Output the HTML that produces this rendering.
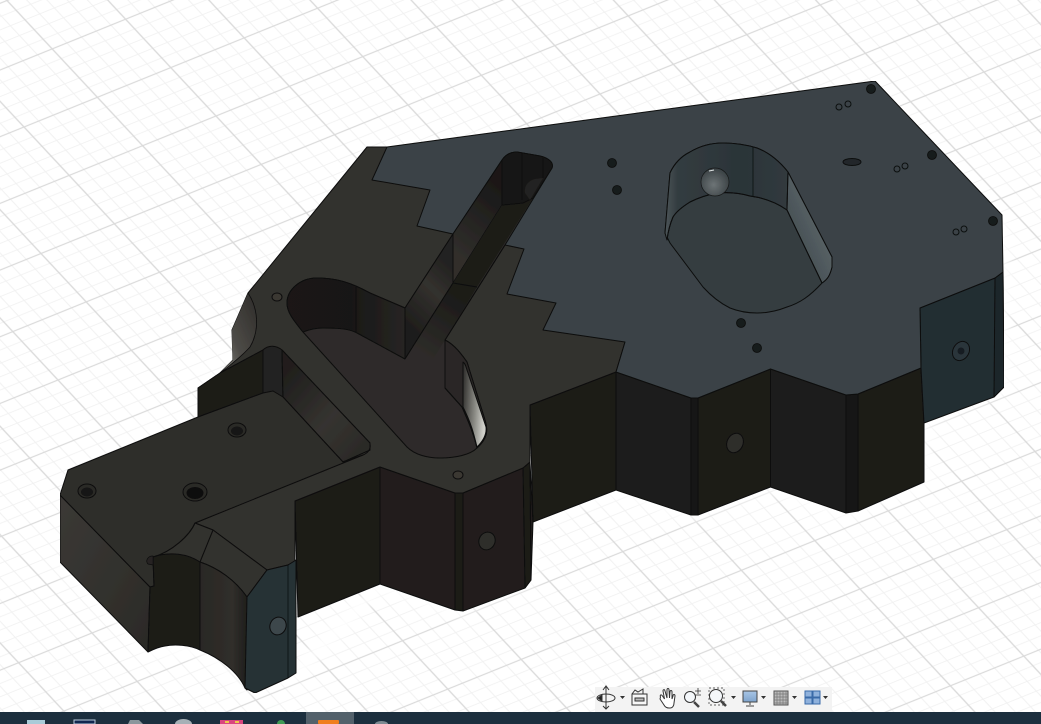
<!DOCTYPE html>
<html lang="en"><head><meta charset="utf-8"><title>CAD model view</title>
<style>
html,body{margin:0;padding:0;background:#fff;width:1041px;height:724px;overflow:hidden}
svg{display:block;position:absolute;left:0;top:0}
</style></head>
<body>
<svg width="1041" height="724" viewBox="0 0 1041 724" xmlns="http://www.w3.org/2000/svg">
<defs>
<pattern id="grid" patternUnits="userSpaceOnUse" width="100" height="100" patternTransform="matrix(.734 -.297 .452 .484 668 600)">
<rect width="100" height="100" fill="#fff"/>
<path d="M20 0V100M40 0V100M60 0V100M80 0V100M0 20H100M0 40H100M0 60H100M0 80H100" stroke="#f1f1f1" stroke-width="1.300" fill="none"/>
<path d="M0 0V100M100 0V100M0 0H100M0 100H100" stroke="#dadada" stroke-width="1.800" fill="none"/>
</pattern>
<filter id="bl" x="-10%" y="-10%" width="120%" height="120%"><feGaussianBlur stdDeviation="5"/></filter>
<filter id="soft" x="0" y="0" width="100%" height="100%"><feGaussianBlur stdDeviation=".35"/></filter>
<linearGradient id="w1" x1="0" x2="1"><stop offset="0" stop-color="#1a1918"/><stop offset=".55" stop-color="#191817"/><stop offset="1" stop-color="#272523"/></linearGradient>
<linearGradient id="w2" gradientUnits="userSpaceOnUse" x1="405" y1="320" x2="453" y2="270"><stop offset="0" stop-color="#1f1e1c"/><stop offset=".6" stop-color="#33312e"/><stop offset="1" stop-color="#242321"/></linearGradient>
<linearGradient id="w3" gradientUnits="userSpaceOnUse" x1="453" y1="250" x2="502" y2="190"><stop offset="0" stop-color="#302e2b"/><stop offset="1" stop-color="#1a1918"/></linearGradient>
<linearGradient id="fl" gradientUnits="userSpaceOnUse" x1="462" y1="300" x2="425" y2="355"><stop offset="0" stop-color="#1c1b19"/><stop offset="1" stop-color="#2e2c29"/></linearGradient>
<linearGradient id="lit" x1="0" y1="0" x2="1" y2=".2"><stop offset="0" stop-color="#2b2a28"/><stop offset=".6" stop-color="#8a8a84"/><stop offset="1" stop-color="#cfcfc9"/></linearGradient>
<linearGradient id="cut" x1="1" y1="0" x2="0" y2="1"><stop offset="0" stop-color="#2e2c29"/><stop offset=".6" stop-color="#4d4b47"/><stop offset="1" stop-color="#8b8a84"/></linearGradient>
<linearGradient id="rw" gradientUnits="userSpaceOnUse" x1="285" y1="375" x2="370" y2="450"><stop offset="0" stop-color="#201f1d"/><stop offset=".55" stop-color="#353330"/><stop offset="1" stop-color="#2a2926"/></linearGradient>
<linearGradient id="nose" x1="0" x2="1"><stop offset="0" stop-color="#2a2825"/><stop offset=".7" stop-color="#302e2a"/><stop offset="1" stop-color="#1f1e1c"/></linearGradient>
<linearGradient id="leftf" x1="0" x2="1" y1="0" y2="1"><stop offset="0" stop-color="#3b3935"/><stop offset="1" stop-color="#2b2a27"/></linearGradient>
<linearGradient id="blstrip" gradientUnits="userSpaceOnUse" x1="785" y1="235" x2="830" y2="215"><stop offset="0" stop-color="#434c50"/><stop offset=".7" stop-color="#566064"/><stop offset="1" stop-color="#4a5357"/></linearGradient>
<linearGradient id="bwall" gradientUnits="userSpaceOnUse" x1="665" y1="0" x2="790" y2="0"><stop offset="0" stop-color="#4c5558"/><stop offset=".1" stop-color="#333c40"/><stop offset=".6" stop-color="#2b3438"/><stop offset="1" stop-color="#313a3e"/></linearGradient>
<radialGradient id="sph" cx=".45" cy=".6" r=".6"><stop offset="0" stop-color="#6d7476"/><stop offset="1" stop-color="#3a4144"/></radialGradient>
<linearGradient id="monitor" x1="0" y1="0" x2="0" y2="1"><stop offset="0" stop-color="#a9c6e6"/><stop offset="1" stop-color="#7ea3cc"/></linearGradient>
</defs>

<rect width="1041" height="724" fill="url(#grid)"/>

<!-- white halo -->
<path d="M60 562L148 652 200 650 245 688 296 673 380 585 458 611 531 580 533 522 616 490 691 515 770 487 846 513 924 482 924 423 1004 387 1003 272 1002 215" fill="none" stroke="#fff" stroke-width="10" filter="url(#bl)"/>

<g filter="url(#soft)">
<g stroke="#0c0d0d" stroke-width="1" stroke-linejoin="round">
<!-- side panels -->
<path d="M295 501L380 467 380 584 298 617Z" fill="#1c1b19"/>
<path d="M380 467L455 493 455 610 380 584Z" fill="#211f1d"/>
<path d="M455 493L463 493 463 611 455 610Z" fill="#1c1b19"/>
<path d="M463 493L523 468 530 462 533 522 531 580 525 588 463 611Z" fill="#211f1d"/>
<path d="M523 468L530 462 531 580 525 588Z" fill="#1b1a18"/>
<path d="M530 405L616 372 616 490 533 522Z" fill="#1c1b19"/>
<path d="M616 372L691 398 691 515 616 490Z" fill="#1f1d1b"/>
<path d="M691 398L698 398 698 515 691 515Z" fill="#191816"/>
<path d="M698 398L770.500 369 770.500 487 698 515Z" fill="#1c1b19"/>
<path d="M770.500 369L846 395 846 513 770.500 487Z" fill="#1f1d1b"/>
<path d="M846 395L858 394 858 511 846 513Z" fill="#191816"/>
<path d="M858 394L921 368 924 423 924 482 858 511Z" fill="#1c1b19"/>
<path d="M920 308L995 278 1003 272 1004 387 994 397 924 423 921 368Z" fill="#242e33"/>
<path d="M995 278L1003 272 1004 387 994 397Z" fill="#1f272b"/>

<!-- left lower face -->
<path d="M60 495L150 587 148 652 60 562Z" fill="url(#leftf)"/>

<!-- big brown upper surface -->
<path d="M367 147L500 147 625 342 616 372 530 405 530 462 523 468 463 493 455 493 380 467 295 501 295 562 288 565 267 570 213 530 195 523 370 450 370 443 282 350 263 350 198 388 220 373 233 360 232 330 248 293Z" fill="#33302d"/>

<!-- curved cutout wall -->
<path d="M248 293C258 308 260 330 250 347 240 358 228 367 220 373L233 360C232 350 232 340 232 330Z" fill="url(#cut)" stroke="none"/>
<path d="M248 293C258 308 260 330 250 347 240 358 228 367 220 373" fill="none" stroke-width=".8"/>

<!-- back block behind lower floor -->
<path d="M198 388L220 373 263 350 263 393 198 417Z" fill="#1c1b19"/>
<path d="M263 350C268 345 276 345 282 350L283 397 273 392 263 393Z" fill="#232220"/>
<path d="M282 350L370 443 370 450 343 462 283 397Z" fill="url(#rw)"/>

<!-- lower floor / tab top -->
<path d="M68 470L198 417 263 393 273 391 283 397 343 462 363 455 195 523C190 535 172 552 153 557L154 586 150 587 60 495Z" fill="#2f2d2a"/>
<path d="M343 462L363 455C368 453 371 449 370 444" fill="none"/>

<!-- nose top -->
<path d="M195 523L213 530 267 570 247 597C235 580 218 568 200 562 190 556 170 551 153 557 172 552 190 535 195 523Z" fill="#33302d"/>
<path d="M213 530L200 562M267 570L247 597" fill="none"/>

<!-- nose walls -->
<path d="M153 557C170 551 188 554 200 562L200 650C190 645 175 644 165 646 158 647 152 650 148 652L150 587 154 586Z" fill="#1c1b19"/>
<path d="M200 562C218 568 235 580 247 597L247 690 245 688C238 672 220 658 200 650Z" fill="url(#nose)"/>
<path d="M247 597L267 570 288 565 296 560 296 673 288 678 255 693 245 688Z" fill="#273136"/>
<path d="M288 565V678" fill="none" stroke-width=".8"/>
<ellipse cx="278" cy="626" rx="8" ry="9" transform="rotate(25 278 626)" fill="#3c464b"/>
<path d="M148 564a6 5 0 0 1 5-8v9z" fill="#252422" stroke-width=".7"/>

<!-- blue top surface -->
<path d="M387 147L875 81 1002 215 1003 272 995 278 920 308 921 368 858 394 846 395 770.500 369 698 398 691 398 616 372 625 342 543 330 556 303 507 294 524 249 505 245 453 234 417 226 430 190 372 180Z" fill="#3a4346"/>

<!-- long pocket floor -->
<path d="M287 303C287 290 300 278 317 278 335 278 350 282 370 293L405 308 453 234 502 160C506 154 512 152 517 152L540 156C548 158 554 162 552 168L505 245 445 340C455 345 462 355 467 362L485 420C488 430 488 438 477 448 470 455 455 458 440 458 428 458 415 455 407 447L303 332C295 322 287 313 287 303Z" fill="#2e2c29"/>
<!-- wall round end -->
<path d="M287 303C287 290 300 278 317 278 335 278 350 282 370 293L405 308 405 359 357 333C350 329 340 328 323 328 315 328 308 330 303 332 295 322 287 313 287 303Z" fill="url(#w1)"/>
<path d="M356 287V332" fill="none" stroke-width=".8"/>
<!-- wall towards slot -->
<path d="M405 308L453 234 453 283 405 359Z" fill="url(#w2)"/>
<path d="M453 234L502 160 502 205 453 283Z" fill="url(#w3)"/>
<!-- slot floor -->
<path d="M453 283L502 205 523 203 533 198 477 287Z" fill="#1c1b19" stroke="none"/>
<path d="M453 283L405 359 425 372 445 340 477 287Z" fill="url(#fl)" stroke="none"/>
<path d="M453 283L477 287M405 359L453 283" fill="none"/>
<!-- slot end -->
<path d="M502 160C506 154 512 152 517 152L540 156C548 158 554 162 552 168L533 198 523 203 502 205Z" fill="#191816"/>
<path d="M522 153V200M543 158V178" fill="none" stroke-width=".8"/>
<path d="M535 179C528 181 524 186 525 193L530 200 543 178Z" fill="#232220" stroke="none"/>
<path d="M505 245L445 340" fill="none"/>
<!-- right pocket wall -->
<path d="M445 340C455 345 462 355 467 362L485 420C488 430 488 438 477 448 474 435 470 425 462 407L445 388Z" fill="#2a2825"/>
<path d="M463 362C466 364 466 368 468 373L486 427C487 435 482 442 477 447 474 435 472 425 463 407Z" fill="url(#lit)"/>
<path d="M445 340V388L462 407C470 425 474 435 477 448" fill="none"/>

<!-- big pocket -->
<path d="M665 233L670 173C675 162 682 156 690 152 700 146 712 143 723 143 735 143 747 145 757 148 770 153 780 162 788 172L832 257V267C830 275 828 279 822 283 810 296 800 303 787 307 777 311 767 313 757 313 748 313 740 312 730 308 720 303 712 297 703 287L670 243Z" fill="#343d40"/>
<path d="M665 233L670 173C675 162 682 156 690 152 700 146 712 143 723 143 735 143 747 145 757 148 770 153 780 162 788 172L787 210C777 203 765 198 750 196 740 193 728 192 717 193 706 195 698 198 690 202 682 207 676 212 673 217 670 224 668 232 667 240Z" fill="url(#bwall)"/>
<path d="M788 172L832 257V267C830 275 828 279 822 283L787 210Z" fill="url(#blstrip)"/>
<path d="M667 240C668 232 670 224 673 217 676 212 682 207 690 202 698 198 706 195 717 193 728 192 740 193 750 196 765 198 777 203 787 210L822 283" fill="none"/>
<path d="M753 147V197M788 172L787 210" fill="none" stroke-width=".8"/>
</g>
<circle cx="715" cy="182" r="14" fill="url(#sph)" stroke="#151818" stroke-width=".7"/>
<path d="M709 171L714 170" stroke="#dfe3e3" stroke-width="1" fill="none"/>

<g fill="#171a1b" stroke="#0c0d0d" stroke-width=".8">
<circle cx="612" cy="163" r="4.500"/><circle cx="617" cy="190" r="4.500"/><circle cx="741" cy="323" r="4.500"/><circle cx="757" cy="348" r="4.500"/><circle cx="871" cy="89" r="4.500"/><circle cx="932" cy="155" r="4.500"/><circle cx="993" cy="221" r="4.500"/>
</g>
<g fill="none" stroke="#0d0f10" stroke-width="1">
<circle cx="839" cy="107" r="3"/><circle cx="848" cy="104" r="3"/><circle cx="897" cy="169" r="3"/><circle cx="905" cy="166" r="3"/><circle cx="956" cy="232" r="3"/><circle cx="964" cy="229" r="3"/>
</g>
<ellipse cx="852" cy="162" rx="9" ry="3.500" fill="#22282a" stroke="#0d0f10"/>
<ellipse cx="961" cy="351" rx="8" ry="10" transform="rotate(30 961 351)" fill="#2c363b" stroke="#0d0f10"/>
<circle cx="961" cy="351" r="3.500" fill="#181e21"/>
<g stroke="#0c0d0d" stroke-width="1">
<ellipse cx="277" cy="297" rx="5" ry="4" fill="#3a3733"/>
<ellipse cx="458" cy="475" rx="5" ry="4" fill="#3a3733"/>
<ellipse cx="87" cy="491" rx="9" ry="7" fill="#2c2a27"/>
<ellipse cx="87" cy="492" rx="6" ry="4.500" fill="#141312" stroke="none"/>
<ellipse cx="195" cy="492" rx="12" ry="9" fill="#2c2a27"/>
<ellipse cx="195" cy="493" rx="8.500" ry="6" fill="#100f0e" stroke="none"/>
<ellipse cx="237" cy="430" rx="9" ry="7" fill="#2c2a27"/>
<ellipse cx="237" cy="431" rx="6" ry="4.500" fill="#141312" stroke="none"/>
<ellipse cx="735" cy="443" rx="8" ry="10" transform="rotate(25 735 443)" fill="#2f2d2a"/>
<ellipse cx="487" cy="541" rx="8" ry="9" transform="rotate(25 487 541)" fill="#2f2d2a"/>
</g>
</g>

<!-- nav toolbar -->
<rect x="595" y="687" width="237" height="25" fill="#f3f3f3"/>
<g fill="none" stroke="#333" stroke-width="1">
<!-- orbit -->
<path d="M606 687V709M603 690l3-4 3 4M603 706l3 3 3-3"/>
<ellipse cx="606" cy="698" rx="9" ry="4"/>
<path d="M598 698l4-3v6z" fill="#222"/>
<!-- capture -->
<rect x="632" y="694" width="15" height="11" fill="#f7f7f7"/>
<rect x="635" y="698" width="9" height="3" fill="#bbb"/>
<path d="M632 694l3-4 3 2 5-3v5"/>
<!-- hand -->
<path d="M660 699l4 6c1 2 3 3 5 3h1c3 0 4-3 4-5l1-7c0-2-2-2-2 0l-1 3 0-7c0-2-2-2-2 0l-.5 6-.5-8c0-2-2-2-2 0v8l-2-7c-.5-2-2-1.500-2 0l1.500 8-2-3c-1-2-3-1-2 1z" fill="#fff"/>
<!-- zoom+- -->
<circle cx="690" cy="697" r="5.500" fill="#f4f7fa"/>
<path d="M694 702l5 5" stroke-width="2.500" stroke="#444"/>
<path d="M695 691h6M698 688v6M695 695h6" stroke-width=".8"/>
<!-- fit zoom -->
<circle cx="716" cy="696" r="6.500" fill="#f4f7fa"/>
<path d="M721 701l5 5" stroke-width="2.500" stroke="#444"/>
<rect x="709" y="688" width="15" height="17" stroke-dasharray="2 2" stroke-width=".7"/>
<!-- monitor -->
<rect x="743" y="691" width="14" height="11" fill="url(#monitor)" stroke="#444"/>
<path d="M750 702v3M746 706h8" stroke="#444"/>
<!-- grid -->
<rect x="774" y="691" width="14" height="14" fill="#bbb" stroke="#555"/>
<path d="M777 691v14M780 691v14M783 691v14M786 691v14M774 694h14M774 697h14M774 700h14M774 703h14" stroke="#777" stroke-width=".7"/>
</g>
<g stroke="#3a6aa8" fill="#8fb1dc" stroke-width="1">
<rect x="805" y="691" width="7" height="6"/><rect x="813" y="691" width="7" height="6"/><rect x="805" y="698" width="7" height="6"/><rect x="813" y="698" width="7" height="6"/>
</g>
<g fill="#333">
<path d="M620 696h5l-2.500 3zM731 696h5l-2.500 3zM761 696h5l-2.500 3zM792 696h5l-2.500 3zM823 696h5l-2.500 3z"/>
</g>

<!-- taskbar -->
<rect x="0" y="712" width="1041" height="12" fill="#1c2f3e"/>
<rect x="306" y="712" width="48" height="12" fill="#53616b"/>
<rect x="27" y="720" width="18" height="4" fill="#a9cbd8"/>
<rect x="74" y="720" width="21" height="4" fill="#10264f" stroke="#b9c9da"/>
<path d="M128 724l2-4h9l4 4z" fill="#8a969c"/>
<path d="M175 724a8.500 5 0 0 1 17 0z" fill="#a6b0b6"/>
<rect x="220" y="720" width="23" height="4" fill="#d9457f"/>
<rect x="225" y="721" width="4" height="2" fill="#e9c94a"/><rect x="235" y="721" width="4" height="2" fill="#e9c94a"/>
<path d="M277 724a4 4 0 0 1 8 0z" fill="#3f9a55"/>
<rect x="318" y="720" width="21" height="4" rx="1" fill="#f07e1d"/>
<path d="M375 724a6.500 3 0 0 1 13 0z" fill="#7e8b93"/>
</svg>
</body></html>
